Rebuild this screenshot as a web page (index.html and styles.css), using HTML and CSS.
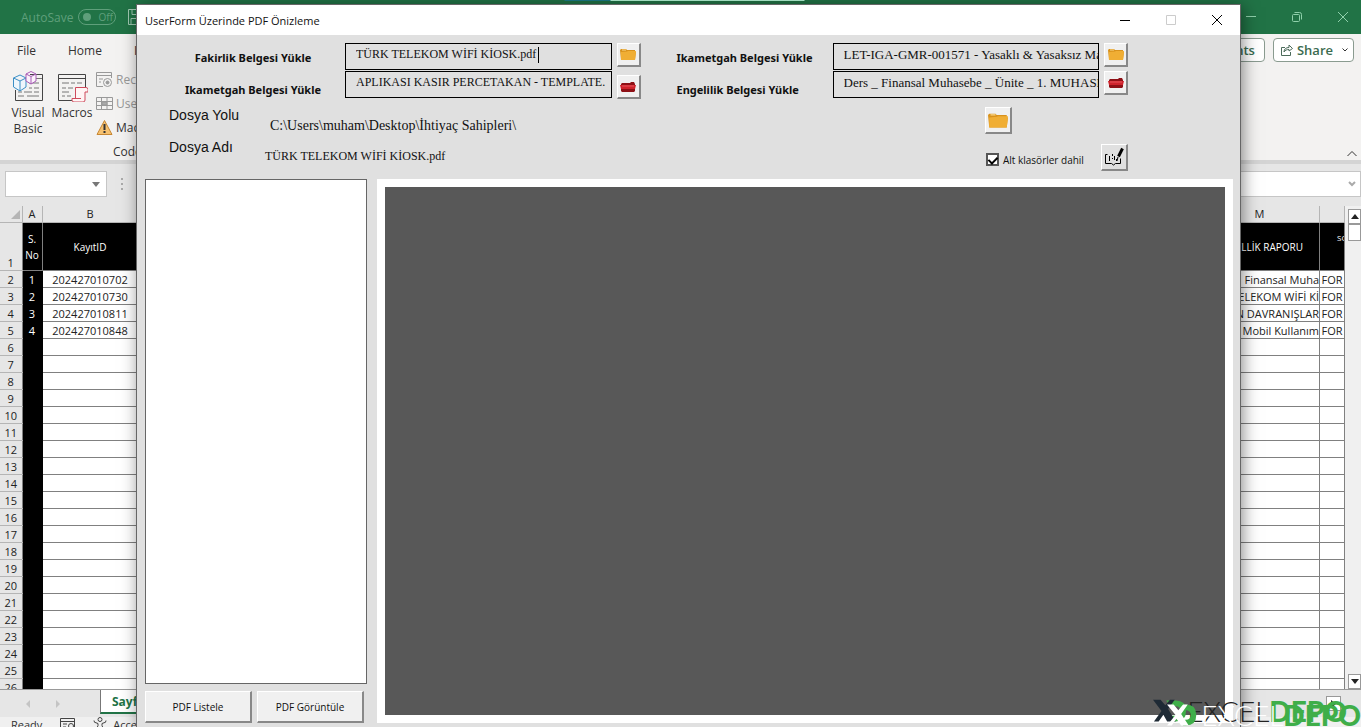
FILE: index.html
```html
<!DOCTYPE html>
<html lang="tr">
<head>
    <meta charset="UTF-8">
    <meta name="viewport" content="width=device-width, initial-scale=1.0">
    <title>UserForm Üzerinde PDF Önizleme</title>
    <link rel="stylesheet" href="styles.css">
</head>
<body>

<div class="excel">
    <header class="title-bar">
        <span class="autosave">AutoSave</span>
        <button class="toggle"><span class="knob"></span>Off</button>
        <svg class="save-icon" width="18" height="18" viewBox="0 0 18 18" fill="none" stroke="#9fc7b0"><path d="M1.500 1.500h12l3 3v12h-15zM5 1.500v5h8v-5M4 16.500v-6h10v6"/></svg>
        <div class="window-buttons">
            <button aria-label="Minimize"><svg width="12" height="12" viewBox="0 0 12 12" fill="none" stroke="#8fd0ab"><path d="M1 5.500h10"/></svg></button>
            <button aria-label="Restore"><svg width="12" height="12" viewBox="0 0 12 12" fill="none" stroke="#8fd0ab"><rect x="1.500" y="3.500" width="7" height="7" rx="1"/><path d="M3.500 1.500h5q2 0 2 2v5"/></svg></button>
            <button aria-label="Close"><svg width="12" height="12" viewBox="0 0 12 12" fill="none" stroke="#8fd0ab"><path d="M1 1l10 10M11 1L1 11"/></svg></button>
        </div>
    </header>

    <nav class="tabs">
        <a href="#">File</a>
        <a href="#">Home</a>
        <a href="#">Insert</a>
        <div class="tab-actions">
            <button class="comments">Comments</button>
            <button class="share">
                <svg width="12" height="12" viewBox="0 0 12 12" fill="none" stroke="#4b6b5a"><path d="M4 3.500H.5v8h9V8M3 8c0-3 2-4.500 5-4.500V1l3.500 3.500L8 7V5.500C6 5.500 4 6 3 8z"/></svg>
                Share
                <svg class="chevron" width="8" height="8" viewBox="0 0 8 8" fill="none" stroke="#333"><path d="M1.500 2.500L4 5l2.500-2.500"/></svg>
            </button>
        </div>
    </nav>

    <section class="ribbon">
        <button class="big-tool">
            <svg width="32" height="32" viewBox="0 0 32 32" fill="none"><path d="M18 4.500h12.500v26h-27V20" stroke="#444"/><path d="M20 8.500h10M17 13h10M17 18h3M22 18h5M6 22h4M12 22h8M22 22h5M6 26h6M15 26h12" stroke="#777"/><path d="M1.500 8L8 5l6 3v9l-6 4-6.500-4zM1.500 8L8 11l6-3M8 11v10" fill="#eef6fc" stroke="#3b8fc6"/><path d="M14 4l5-2.500L24 4v7l-5 3-5-3zM14 4l5 2.500L24 4M19 6.500V14" fill="#fbf2fb" stroke="#a75bb5"/></svg>
            Visual<br>Basic
        </button>
        <button class="big-tool">
            <svg width="32" height="32" viewBox="0 0 32 32" fill="none"><path d="M16 30.500H2.500v-26h27V18M2.500 8.500h27" stroke="#444"/><path d="M6 13h7M15 13h4M21 13h5M6 18h4M12 18h5M6 22h7M6 26h3M11 26h4" stroke="#777"/><path d="M19.500 29V17.500H30q2 0 2 2V22h-3v8q0 2-2 2H18q-2 0-2-2v-1.500h9" fill="#fff4f4" stroke="#cf4a5c"/></svg>
            Macros
        </button>
        <div class="small-tools">
            <button class="disabled"><svg width="17" height="17" viewBox="0 0 17 17" fill="none" stroke="#999"><path d="M7 15.500H.5v-14h15V7M.5 4.500h15M3 8h4M3 11h2"/><circle cx="11.500" cy="11.500" r="4"/><circle cx="11.500" cy="11.500" r="1.500" fill="#999"/></svg>Record Macro</button>
            <button class="disabled"><svg width="17" height="17" viewBox="0 0 17 17" fill="none" stroke="#999"><path d="M.5 2.500h16v12H.5zM.5 6.500h16M.5 10.500h16M5.500 2.500v12M11 2.500v12"/><path d="M6 7h5v3H6z" fill="#aaa"/></svg>Use Relative</button>
            <button><svg width="17" height="17" viewBox="0 0 17 17"><path d="M8.500 1.500L16 15.500H1z" fill="#f6c16f" stroke="#c78733"/><path d="M8.500 5v6M8.500 12v2" stroke="#333" stroke-width="2"/></svg>Macro Security</button>
        </div>
        <span class="group-name">Code</span>
        <svg class="collapse" width="12" height="8" viewBox="0 0 12 8" fill="none" stroke="#333"><path d="M1.500 6L6 1.500 10.500 6"/></svg>
    </section>

    <div class="formula-bar">
        <div class="name-box">
            <input type="text" aria-label="Name Box">
            <svg width="8" height="5" viewBox="0 0 8 5" fill="#777"><path d="M0 0h8L4 5z"/></svg>
        </div>
        <svg width="4" height="12" viewBox="0 0 4 12" fill="#aaa"><path d="M1 0h2v2H1zM1 5h2v2H1zM1 10h2v2H1z"/></svg>
        <div class="formula">
            <input type="text" aria-label="Formula Bar">
            <svg width="8" height="8" viewBox="0 0 8 8" fill="none" stroke="#aaa" stroke-width="2"><path d="M1 2l3 3 3-3"/></svg>
        </div>
    </div>

    <main class="sheet">
        <table>
            <colgroup><col class="col-num"><col class="col-a"><col class="col-b"><col><col class="col-m"><col class="col-n"></colgroup>
            <thead>
                <tr><th><svg width="9" height="9" viewBox="0 0 9 9" fill="#b5b5b5"><path d="M9 0v9H0z"/></svg></th><th>A</th><th>B</th><th></th><th class="letter-m">M</th><th></th></tr>
            </thead>
            <tbody id="rows"></tbody>
        </table>
        <div class="scrollbar">
            <button aria-label="Scroll up"><svg width="8" height="5" viewBox="0 0 8 5" fill="#222"><path d="M0 5h8L4 0z"/></svg></button>
            <div class="thumb"></div>
            <button aria-label="Scroll down" class="down"><svg width="8" height="5" viewBox="0 0 8 5" fill="#222"><path d="M0 0h8L4 5z"/></svg></button>
        </div>
    </main>

    <div class="sheet-tabs">
        <svg width="34" height="8" viewBox="0 0 34 8" fill="#c4c4c4"><path d="M4 0v8L0 4zM30 0v8l4-4z"/></svg>
        <a href="#">Sayfa1</a>
        <button class="scroll-right" aria-label="Scroll right"><svg width="5" height="8" viewBox="0 0 5 8" fill="#222"><path d="M0 0v8l5-4z"/></svg></button>
    </div>
    <footer class="status-bar">
        <span>Ready</span>
        <svg width="15" height="14" viewBox="0 0 15 14" fill="none" stroke="#444"><path d="M.5 1.500h14v11H.5zM.5 4.500h14M3 7h4M3 10h3"/><circle cx="11" cy="9" r="2.500"/></svg>
        <svg width="14" height="14" viewBox="0 0 14 14" fill="none" stroke="#444"><circle cx="7" cy="2.500" r="2"/><path d="M1 3.500q-1 2 4 3v2l-2 5M13 3.500q1 2-4 3v2l2 5"/></svg>
        <span>Accessibility</span>
    </footer>
</div>

<div class="userform">
    <div class="form-title">
        <h1>UserForm Üzerinde PDF Önizleme</h1>
        <button aria-label="Simge durumuna küçült"><svg width="12" height="12" viewBox="0 0 12 12" fill="none" stroke="#000"><path d="M1 6.500h10"/></svg></button>
        <button aria-label="Ekranı kapla" disabled><svg width="12" height="12" viewBox="0 0 12 12" fill="none" stroke="#ccc"><path d="M1.500 1.500h9v9h-9z"/></svg></button>
        <button aria-label="Kapat"><svg width="12" height="12" viewBox="0 0 12 12" fill="none" stroke="#000"><path d="M1 1l10 10M11 1L1 11"/></svg></button>
    </div>

    <svg class="symbols" aria-hidden="true">
        <symbol id="folder" viewBox="0 0 16 13"><path d="M0 2l1-1h5l1 1h8v2h1l-1 8H1z" fill="#d9921c"/><path d="M1 4l6-.5L8 3h8l-1 9H1z" fill="#f0ae34"/><path d="M2 2h4" stroke="#fbd98a"/></symbol>
        <symbol id="folder-red" viewBox="0 0 16 13"><path d="M1 4l1-1h8l1-1h3l1 2v7l-1 1H2l-1-1z" fill="#8e1016"/><path d="M0 5h16l-1 4H1z" fill="#cf232c"/><path d="M2 6h12" stroke="#e8555b"/></symbol>
    </svg>

    <div class="documents">
        <div class="labels centered">
            <label for="fakirlik">Fakirlik Belgesi Yükle</label>
            <label for="ikametgah">Ikametgah Belgesi Yükle</label>
        </div>
        <div class="inputs capitals">
            <div class="active-field">
                <input type="text" id="fakirlik" value="TÜRK TELEKOM WİFİ KİOSK.pdf">
                <span class="caret"></span>
            </div>
            <input type="text" id="ikametgah" value="APLIKASI KASIR PERCETAKAN - TEMPLATE.">
        </div>
        <div class="pickers spaced">
            <button aria-label="Fakirlik belgesi seç"><svg width="16" height="13"><use href="#folder"/></svg></button>
            <button aria-label="Ikametgah belgesi seç"><svg width="16" height="13"><use href="#folder-red"/></svg></button>
        </div>
        <div class="labels second">
            <label for="ikametgah2">Ikametgah Belgesi Yükle</label>
            <label for="engelilik">Engelilik Belgesi Yükle</label>
        </div>
        <div class="inputs">
            <input type="text" id="ikametgah2" value="LET-IGA-GMR-001571 - Yasaklı &amp; Yasaksız Maddeler.pdf">
            <input type="text" id="engelilik" value="Ders _ Finansal Muhasebe _ Ünite _ 1. MUHASEBE.pdf">
        </div>
        <div class="pickers">
            <button aria-label="Ikametgah belgesi seç"><svg width="16" height="13"><use href="#folder"/></svg></button>
            <button aria-label="Engelilik belgesi seç"><svg width="16" height="13"><use href="#folder-red"/></svg></button>
        </div>
    </div>

    <div class="location">
        <div class="names"><span>Dosya Yolu</span><span>Dosya Adı</span></div>
        <div class="values">
            <span class="path">C:\Users\muham\Desktop\İhtiyaç Sahipleri\</span>
            <span>TÜRK TELEKOM WİFİ KİOSK.pdf</span>
        </div>
        <div class="options">
            <button class="tool" aria-label="Klasör seç"><svg width="20" height="17"><use href="#folder"/></svg></button>
            <div class="option-row">
                <label><input type="checkbox" checked>Alt klasörler dahil</label>
                <button class="tool" aria-label="Düzenle"><svg width="20" height="20" viewBox="0 0 20 20" fill="none" stroke="#000"><path d="M3.500 7.500h-2v9h6l2 1.500 2-1.500h5v-5"/><path d="M5.500 9v5M8.500 7v2M8.500 11v1M10.500 9v4M12.500 12v2" /><path d="M18.500 1.500l-4 8" stroke-width="3"/><path d="M14 10l-1 4"/></svg></button>
            </div>
        </div>
    </div>

    <div class="preview">
        <div class="list-side">
            <select multiple aria-label="PDF listesi"></select>
            <div class="list-buttons">
                <button>PDF Listele</button>
                <button>PDF Görüntüle</button>
            </div>
        </div>
        <div class="viewer"></div>
    </div>
</div>

<div class="watermark dark">
    <svg width="34" height="28" viewBox="0 0 36 28"><path d="M14 3h10q11 0 11 11T24 25h-6v-6h6q5 0 5-5t-5-5h-6z" fill="#3fae49"/><path d="M0 2h8l5 6 5-6h5l-7 10 8 13h-9l-4-7-5 7H1l8-11z" fill="#1e2a35"/></svg>
    <span>EXCEL</span><b>DEPO</b>
</div>
<div class="watermark light">
    <svg width="34" height="28" viewBox="0 0 36 28"><path d="M14 3h6q11 0 11 11T20 25h-3v-6h3q5 0 5-5t-5-5h-6z" fill="#3fae49"/><path d="M0 3h7l5 6 5-6h5l-7 10 8 12h-8l-5-7-5 7H0l9-11z" fill="#fff"/></svg>
    <span>EXCEL</span><b>DEPO</b>
</div>

<script>
    const records = [
        ["202427010702", "Finansal Muha"],
        ["202427010730", "ELEKOM WİFİ Kİ"],
        ["202427010811", "N DAVRANIŞLAR"],
        ["202427010848", "Mobil Kullanım"]
    ];

    let html = `<tr class="head"><th>1</th><td>S.<br>No</td><td>KayıtID</td><td></td><td class="m">ENGELLİK RAPORU</td><td class="so">SO</td></tr>`;
    for (let row = 2; row <= 26; row++) {
        const record = records[row - 2];
        html += `<tr><th>${row}</th><td class="no">${record ? row - 1 : ""}</td><td>${record ? record[0] : ""}</td><td></td>`;
        html += `<td class="m"><div>${record ? record[1] : ""}</div></td><td class="n">${record ? "FOR" : ""}</td></tr>`;
    }
    document.getElementById("rows").innerHTML = html;
</script>

</body>
</html>
```
FILE: styles.css
```css
* {
    box-sizing: border-box;
}

body {
    margin: 0;
    height: 100vh;
    overflow: hidden;
    position: relative;
    font-family: "Open Sans", "Noto Sans", sans-serif;
    font-size: 12px;
    color: #333;
}

button, input, select {
    font: inherit;
    color: inherit;
    margin: 0;
    padding: 0;
    border: none;
    border-radius: 0;
    background: none;
}

a {
    color: inherit;
    text-decoration: none;
}

svg {
    display: block;
    flex: none;
}

/* Excel */
.excel {
    display: flex;
    flex-direction: column;
    height: 100vh;
    background: #e6e6e6;
}

.title-bar {
    display: flex;
    align-items: center;
    flex: none;
    height: 34px;
    padding-left: 21px;
    background: linear-gradient(90deg, #217346 564px, #1c7a86 565px, #1c7a86 610px, #b5f5d6 611px, #b5f5d6 804px, #217346 805px) 0 0 / 100% 1px no-repeat #217346;
    color: #5f9f7b;
}

.toggle {
    display: flex;
    align-items: center;
    width: 38px;
    height: 16px;
    margin: 0 11px 0 5px;
    padding-left: 4px;
    gap: 7px;
    border: 1px solid #5f9f7b;
    border-radius: 8px;
    font-size: 10px;
}

.knob {
    width: 8px;
    height: 8px;
    border-radius: 50%;
    background: #5f9f7b;
}

.window-buttons {
    display: flex;
    margin-left: auto;
    gap: 34px;
    padding-right: 12px;
}

.tabs {
    display: flex;
    align-items: center;
    flex: none;
    height: 32px;
    padding-left: 17px;
    gap: 32px;
    background: #f3f2f1;
    font-size: 12px;
}

.tab-actions {
    display: flex;
    gap: 8px;
    margin-left: auto;
    padding-right: 7px;
}

.tab-actions button {
    display: flex;
    align-items: center;
    height: 24px;
    padding: 0 9px;
    border: 1px solid #8a9b90;
    border-radius: 4px;
    background: #fff;
    color: #3b6b50;
    font-size: 13px;
    font-weight: 600;
    gap: 4px;
}

.tab-actions .share {
    padding: 0 4px 0 7px;
}

.share .chevron {
    margin-left: 4px;
}

.ribbon {
    display: flex;
    position: relative;
    flex: none;
    height: 98px;
    padding: 4px 8px 0;
    gap: 4px;
    background: #f3f2f1;
    border-bottom: 4px solid #d4d4d4;
}

.big-tool {
    display: flex;
    flex-direction: column;
    align-items: center;
    align-self: flex-start;
    width: 40px;
    line-height: 16px;
}

.big-tool svg {
    margin-bottom: 3px;
}

.small-tools {
    display: flex;
    flex-direction: column;
    margin-top: -3px;
    white-space: nowrap;
}

.small-tools button {
    display: flex;
    align-items: center;
    height: 24px;
    gap: 3px;
}

.small-tools .disabled {
    color: #999;
}

.group-name {
    position: absolute;
    left: 113px;
    bottom: 0;
}

.collapse {
    position: absolute;
    right: 3px;
    bottom: 2px;
}

.formula-bar {
    display: flex;
    align-items: center;
    flex: none;
    height: 42px;
    padding: 0 0 2px 5px;
    gap: 13px;
}

.name-box, .formula {
    display: flex;
    align-items: center;
    width: 102px;
    height: 26px;
    padding-right: 6px;
    border: 1px solid #c6c6c6;
    background: #fff;
}

.name-box input, .formula input {
    flex: 1;
    min-width: 0;
}

.formula {
    flex: 1;
    padding-right: 4px;
}

.sheet {
    display: flex;
    flex: 1;
    min-height: 0;
    overflow: hidden;
}

.sheet table {
    flex: 1;
    width: 100%;
    align-self: flex-start;
    table-layout: fixed;
    border-collapse: collapse;
    font-size: 11px;
    color: #222;
}

.col-num {
    width: 22px;
}

.col-a {
    width: 20px;
}

.col-b {
    width: 96px;
}

.col-m {
    width: 120px;
}

.col-n {
    width: 25px;
}

.sheet th, .sheet td {
    height: 17px;
    padding: 1px 0 0;
    border: 1px solid #808080;
    line-height: 15px;
    text-align: center;
    white-space: nowrap;
    overflow: hidden;
}

.sheet td {
    background: #fff;
}

.sheet th {
    font-weight: normal;
    background: #e6e6e6;
    border-left: none;
    border-top-color: #b5b5b5;
    border-bottom-color: #b5b5b5;
}

.sheet thead th {
    height: 16px;
    border-top: none;
    border-color: #b5b5b5;
    line-height: 14px;
}

.sheet thead svg {
    margin-left: 11px;
}

.sheet .head td {
    background: #000;
    color: #fff;
    font-size: 10px;
    line-height: 16px;
}

.sheet .head th {
    height: 48px;
    vertical-align: bottom;
}

.sheet .no {
    background: #000;
    color: #fff;
    border-color: #000;
}

.sheet .m div {
    display: flex;
    justify-content: flex-end;
    height: 15px;
}

.sheet .head .m {
    text-align: right;
    padding-right: 16px;
}

.sheet .head .so {
    font-size: 8px;
    text-align: left;
    padding: 0 0 16px 17px;
}

.scrollbar {
    display: flex;
    flex-direction: column;
    flex: none;
    width: 16px;
    padding: 3px 0 0 3px;
    background: #f0f0f0;
}

.scrollbar button, .thumb {
    display: flex;
    align-items: center;
    justify-content: center;
    height: 15px;
    border: 1px solid #999;
    background: #fff;
}

.thumb {
    height: 17px;
}

.scrollbar .down {
    margin-top: auto;
}

.sheet-tabs {
    display: flex;
    align-items: center;
    flex: none;
    height: 28px;
    padding: 0 20px 0 26px;
    border-top: 1px solid #999;
    background: #e6e6e6;
}

.sheet-tabs a {
    height: 24px;
    margin: 0 0 4px 40px;
    padding: 0 11px;
    border-left: 1px solid #777;
    border-bottom: 2px solid #217346;
    background: #fff;
    color: #217346;
    font-size: 12px;
    font-weight: bold;
    line-height: 24px;
}

.scroll-right {
    display: flex;
    align-items: center;
    justify-content: center;
    width: 15px;
    height: 15px;
    margin-left: auto;
    border: 1px solid #999;
    background: #fff;
}

.status-bar {
    display: flex;
    flex: none;
    height: 10px;
    padding-left: 11px;
    gap: 18px;
    overflow: hidden;
    background: #f0f0f0;
    font-size: 11px;
}

.status-bar span:last-child {
    margin-left: -12px;
}

/* UserForm window */
.userform {
    position: absolute;
    top: 5px;
    right: 121px;
    bottom: 0;
    left: 137px;
    display: flex;
    flex-direction: column;
    background: #e0e0e0;
    color: #111;
    box-shadow: 0 0 0 1px #666, 2px 2px 16px rgba(0, 0, 0, 0.5);
}

.form-title {
    display: flex;
    align-items: center;
    flex: none;
    height: 30px;
    padding: 0 17px 0 8px;
    gap: 34px;
    background: #fff;
}

.form-title h1 {
    margin: 0 auto 0 0;
    font-size: 11px;
    font-weight: normal;
}

.form-title button {
    width: 12px;
}

.symbols {
    position: absolute;
    width: 0;
    height: 0;
}

.documents {
    display: flex;
    flex: none;
    height: 64px;
    padding: 8px 112px 0 32px;
}

.labels {
    display: flex;
    flex-direction: column;
    flex: none;
    width: 156px;
    margin-top: -1px;
    font-family: "Noto Sans", sans-serif;
    font-size: 11px;
    font-weight: bold;
    line-height: 32px;
}

.labels.centered {
    width: 176px;
    padding-right: 8px;
    text-align: center;
}

.inputs {
    display: flex;
    flex-direction: column;
    flex: 1;
    min-width: 0;
    gap: 1px;
    font-family: "Liberation Serif", serif;
    font-size: 13px;
}

.inputs.capitals {
    font-size: 12px;
}

.inputs input {
    width: 100%;
    height: 27px;
    padding: 0 0 4px 10px;
    border: 1px solid #000;
    outline: none;
}

.active-field {
    position: relative;
    height: 27px;
}

.caret {
    position: absolute;
    top: 4px;
    left: 193px;
    width: 1px;
    height: 16px;
    background: #000;
}

.pickers {
    display: flex;
    flex-direction: column;
    flex: none;
    gap: 4px;
    margin-left: 5px;
}

.pickers.spaced {
    gap: 8px;
    margin-right: 36px;
}

.pickers button, .tool, .list-buttons button {
    display: flex;
    align-items: center;
    justify-content: center;
    width: 24px;
    height: 24px;
    border: 1px solid #fff;
    border-right: 2px solid #888;
    border-bottom: 2px solid #888;
    background: #f0f0f0;
}

.location {
    display: flex;
    flex: none;
    height: 80px;
    padding: 0 112px 0 32px;
}

.names, .values {
    display: flex;
    flex-direction: column;
}

.names {
    width: 96px;
    font-family: "Liberation Sans", sans-serif;
    font-size: 14px;
    line-height: 32px;
}

.values {
    padding-top: 12px;
    font-family: "Liberation Serif", serif;
    font-size: 12px;
    line-height: 30px;
}

.path {
    padding-left: 5px;
    font-size: 14px;
}

.options {
    display: flex;
    flex-direction: column;
    gap: 10px;
    width: 143px;
    margin-left: auto;
    padding-top: 8px;
}

.options .tool {
    width: 27px;
    height: 27px;
}

.option-row {
    display: flex;
    justify-content: space-between;
}

.option-row .tool {
    background: #e0e0e0;
}

.option-row label {
    display: flex;
    align-items: center;
    gap: 4px;
    padding: 4px 0 0 1px;
    font-size: 10px;
    white-space: nowrap;
}

.option-row input {
    appearance: none;
    width: 13px;
    height: 13px;
    border: 2px solid #555;
    background: #fff;
}

.option-row input:checked::before {
    content: "";
    display: block;
    width: 4px;
    height: 7px;
    margin: 0 auto;
    border: solid #000;
    border-width: 0 2px 2px 0;
    transform: rotate(45deg);
}

.preview {
    display: flex;
    flex: 1;
    min-height: 0;
    padding: 0 7px 4px 8px;
    gap: 10px;
}

.list-side {
    display: flex;
    flex-direction: column;
    width: 222px;
    gap: 7px;
}

.list-side select {
    flex: 1;
    border: 1px solid #666;
    background: #fff;
}

.list-buttons {
    display: flex;
    gap: 5px;
}

.list-buttons button {
    width: 107px;
    height: 32px;
    font-size: 10px;
}

.viewer {
    flex: 1;
    border: 8px solid #fff;
    background: #585858;
}

/* Watermark logos */
.watermark {
    position: absolute;
    right: 14px;
    bottom: -2px;
    display: flex;
    align-items: center;
    font-family: Lato, sans-serif;
    font-size: 28px;
    line-height: 36px;
    color: #222;
    pointer-events: none;
}

.watermark span {
    font-weight: 300;
}

.watermark b {
    color: #3fae49;
    font-weight: 900;
}

.watermark.light {
    right: 0;
    bottom: -6px;
    color: #fff;
}
```
